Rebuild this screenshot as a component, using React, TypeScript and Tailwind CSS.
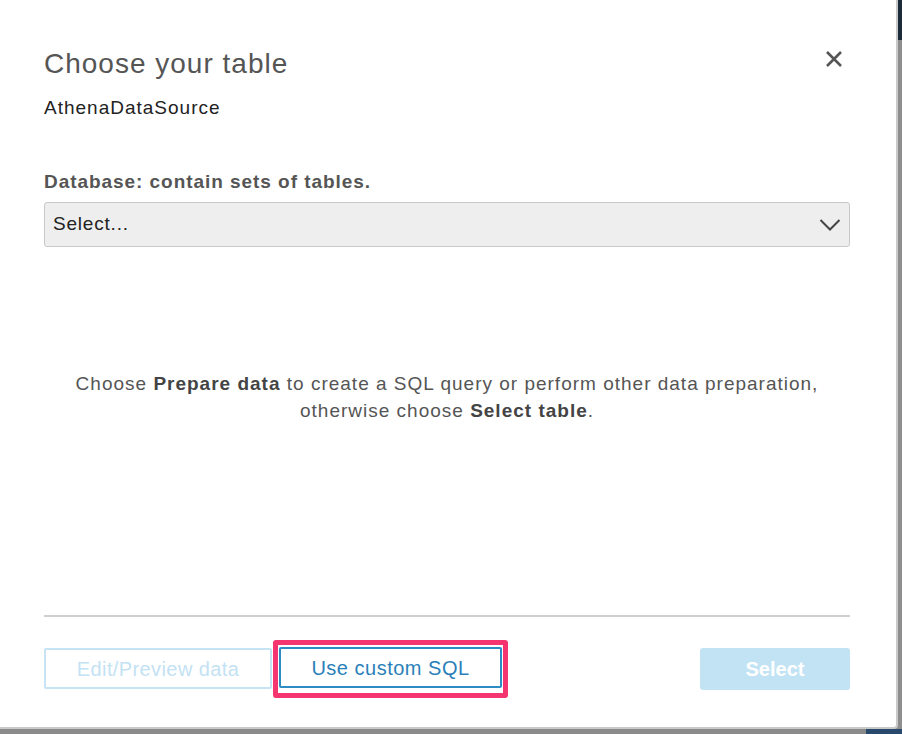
import { useState } from 'react'

export default function App() {
  const [database] = useState('Select...')

  return (
    <div className="w-[902px] h-[734px] flex flex-col bg-[#8e8e8e] overflow-hidden font-['Liberation_Sans',Arial,sans-serif]">
      <div className="flex flex-row h-[729px]">
        {/* Dialog */}
        <div className="w-[898px] h-[729px] bg-white border-r-2 border-b-2 border-[#c9c9c9] rounded-br-[4px] flex flex-col pl-[44px] pr-[46px]">
          <div className="flex items-start justify-between pt-[47px]">
            <h2 className="text-[28px] leading-[34px] tracking-[1px] text-[#555]">Choose your table</h2>
            <button className="mt-[2px] mr-[6px] w-[20px] h-[20px] flex items-center justify-center">
              <svg width="18" height="18" viewBox="0 0 18 18" fill="none">
                <path d="M2 2 L16 16 M16 2 L2 16" stroke="#555" strokeWidth="2.6" strokeLinecap="butt" />
              </svg>
            </button>
          </div>
          <p className="mt-[16px] text-[19px] leading-[22px] tracking-[1px] text-[#222]">AthenaDataSource</p>

          <label className="mt-[52px] text-[19px] leading-[22px] tracking-[0.95px] font-bold text-[#555]">
            Database: contain sets of tables.
          </label>
          <div className="mt-[9px] h-[45px] bg-[#eeeeee] border border-[#c8c8c8] rounded-[3px] flex items-center justify-between pl-[8px] pr-[8px]">
            <span className="text-[19px] tracking-[0.8px] text-[#222]">{database}</span>
            <svg width="22" height="14" viewBox="0 0 22 14" fill="none">
              <path d="M1.5 2 L11 11.5 L20.5 2" stroke="#444" strokeWidth="2" />
            </svg>
          </div>

          {/* Hint */}
          <div className="mt-[123px] text-center text-[19px] leading-[27px] tracking-[1px] text-[#555]">
            <p>
              Choose <span className="font-bold text-[#444]">Prepare data</span> to create a SQL query or perform other data preparation,
            </p>
            <p>
              otherwise choose <span className="font-bold text-[#444]">Select table</span>.
            </p>
          </div>

          {/* Footer */}
          <div className="mt-[191px] border-t-2 border-[#cfcfcf]" />
          <div className="mt-[23px] flex flex-row items-start justify-between">
            <div className="flex flex-row items-start">
              <button className="mt-[8px] w-[228px] h-[41px] border-2 border-[#c6e4f4] rounded-[2px] text-[20px] tracking-[0.4px] text-[#c3e2f3]">
                Edit/Preview data
              </button>
              <div className="ml-[1px] border-[5px] border-[#f5356f] rounded-[3px] pt-[2px] pb-[5px] px-[1px]">
                <button className="w-[223px] h-[41px] border-2 border-[#2e8cc4] rounded-[2px] text-[20px] tracking-[0.5px] text-[#2b7fb9] bg-white">
                  Use custom SQL
                </button>
              </div>
            </div>
            <button className="mt-[8px] w-[150px] h-[42px] bg-[#c2e3f3] rounded-[3px] text-[20px] font-bold text-white">
              Select
            </button>
          </div>
        </div>
        {/* Background strip on the right */}
        <div className="flex-1 flex flex-col">
          <div className="h-[40px] bg-[#1c2b3a]" />
          <div className="flex-1 bg-[#8e8e8e]" />
        </div>
      </div>
      <div className="flex-1 flex flex-row">
        <div className="flex-1 bg-[#8a8a8a]" />
        <div className="w-[36px] bg-[#27496b]" />
      </div>
    </div>
  )
}
